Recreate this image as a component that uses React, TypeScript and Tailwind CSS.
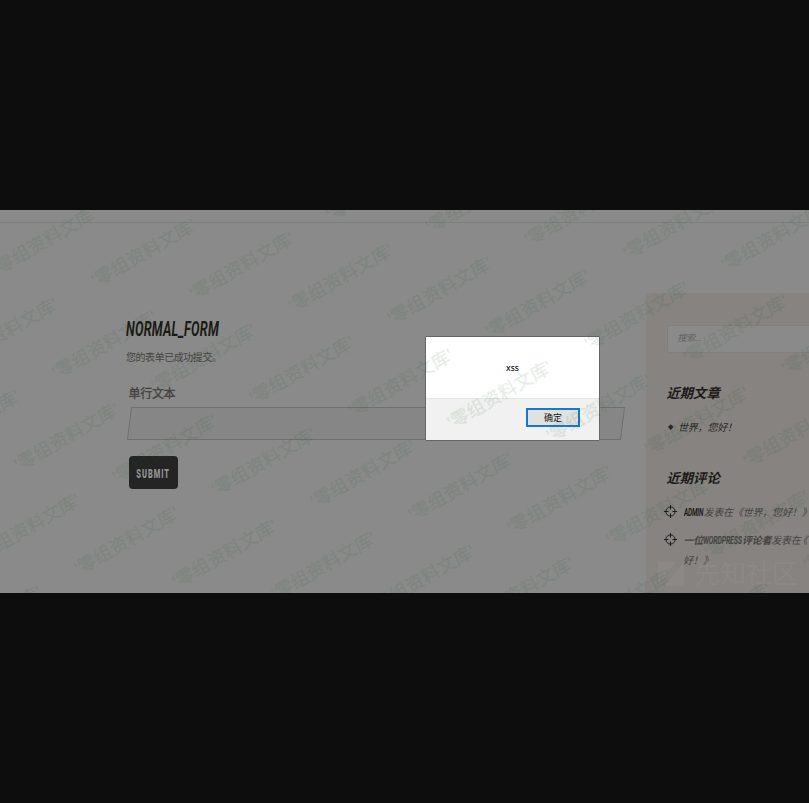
import React from "react";

const stamps = [-2, -1, 0, 1, 2, 3, 4].flatMap((row) =>
  Array.from({ length: 13 }, (_, i) => i - 3).map((col) => ({
    x: 143.5 + 98.7 * col - 38.5 * row,
    y: 43.2 + 12.6 * col + 91.7 * row,
  }))
).filter((p) => p.x > -56 && p.x < 865 && p.y > -38 && p.y < 420);

function Watermark() {
  return (
    <div className="pointer-events-none absolute inset-0 z-20 overflow-hidden" aria-hidden="true">
      {stamps.map((p, i) => (
        <span
          key={i}
          className="absolute -translate-x-1/2 -translate-y-1/2 -rotate-30 text-[18px] leading-none tracking-[0.3px] whitespace-nowrap text-[#1f5b2b] opacity-11 [-webkit-text-stroke:0.25px_#1f5b2b]"
          style={{ left: p.x, top: p.y }}
        >
          '零组资料文库'
        </span>
      ))}
    </div>
  );
}

function Crosshair() {
  return (
    <svg className="h-[14px] w-[14px] shrink-0" viewBox="0 0 14 14" fill="none" stroke="#1d1d1d" strokeWidth="1">
      <circle cx="6.5" cy="6.5" r="4.6" />
      <path d="M6.5 0V4.5M6.5 8.5V13M0 6.5H4.5M8.5 6.5H13" />
    </svg>
  );
}

function FormColumn() {
  return (
    <main className="flex w-[646px] shrink-0 flex-col items-start pt-[95px] pl-[126px]">
      <h1 className="h-[22px] w-[93px] text-[19.5px] leading-[22px] font-bold whitespace-nowrap text-[#1c1a15] italic">
        <span className="inline-block origin-left scale-x-[0.655] font-[Roboto] tracking-[0.3px]">NORMAL_FORM</span>
      </h1>
      <p className="mt-[10px] text-[10px] leading-[16px] tracking-[-0.45px] text-[#454340]">您的表单已成功提交。</p>
      <label className="mt-[18px] ml-[2.5px] text-[12px] leading-[20px] tracking-[-0.3px] text-[#43413e] [-webkit-text-stroke:0.3px_#43413e]">单行文本</label>
      <div className="mt-[3px] ml-[3px] h-[33px] w-[494px] -skew-x-7 border border-[#707070] bg-[#868686]" />
      <button className="mt-[16px] ml-[3px] flex h-[33px] w-[49px] items-center justify-center rounded-[4px] bg-[#242424] pt-[3px] text-[12px] text-[#939393]">
        <span className="inline-block scale-x-[0.62] font-[Roboto] font-black tracking-[1.6px]">SUBMIT</span>
      </button>
    </main>
  );
}

function Sidebar() {
  return (
    <aside className="mt-[70px] flex h-[300px] w-[163px] shrink-0 flex-col overflow-hidden bg-[#868380] pt-[32px] pl-[20.5px] text-[10px] whitespace-nowrap italic">
      <div className="flex h-[28px] w-[160px] shrink-0 items-center rounded-[2px] border border-[#817e7b] bg-[#8a8a8a] pl-[10px] text-[9px] tracking-[-0.3px] text-[#5e5e5e]">
        搜索...
      </div>
      <h2 className="mt-[30px] text-[13.3px] leading-[22px] font-bold text-[#1c1a18]">近期文章</h2>
      <div className="mt-[13px] flex h-[18px] items-center tracking-[-0.2px] text-[#282624]">
        <span className="mr-[6px] ml-[2px] h-[3.5px] w-[3.5px] rotate-45 bg-[#282624]" />
        世界，您好！
      </div>
      <h2 className="mt-[32px] text-[13.3px] leading-[22px] font-bold text-[#1c1a18]">近期评论</h2>
      <div className="mt-[13px] -ml-[3px] flex h-[18px] items-center tracking-[-0.2px] text-[#454240]">
        <Crosshair />
        <span className="ml-[6px] w-[20px] font-[Roboto] font-bold text-[#1c1a18]">
          <span className="inline-block origin-left scale-x-[0.64]">ADMIN</span>
        </span>
        发表在《世界，您好！》
      </div>
      <div className="mt-[10px] -ml-[3px] flex h-[18px] items-center tracking-[-0.25px] text-[#454240]">
        <Crosshair />
        <b className="ml-[6px]">一位</b>
        <span className="w-[39px] font-[Roboto] font-bold">
          <span className="inline-block origin-left scale-x-[0.7]">WORDPRESS</span>
        </span>
        <b>评论者</b>
        <span>发表在</span>
        <span className="-ml-[3px]">《</span>
      </div>
      <div className="mt-[3px] ml-[16.5px] h-[18px] leading-[18px] text-[#454240]">好！》</div>
    </aside>
  );
}

function AlertDialog() {
  return (
    <div className="absolute top-[126px] left-[425px] z-10 flex h-[105px] w-[175px] flex-col rounded-[1px] border border-[#666] bg-white text-[#111]">
      <div className="flex h-[62px] items-center justify-center border-b border-[#e5e5e5] pt-[2px] font-['Noto_Sans'] text-[8.5px] font-medium">xss</div>
      <div className="flex flex-1 items-start justify-end bg-[#f1f1f1] pt-[9px] pr-[19px]">
        <button className="flex h-[19px] w-[54px] items-center justify-center border-2 border-[#1479d2] bg-[#e1e1e1] pt-[2px] text-[9px] leading-none">确定</button>
      </div>
    </div>
  );
}

function CommunityMark() {
  return (
    <div className="absolute top-[350px] left-[658px] flex h-[28px] items-center gap-[9px] text-[#928f8c]/45">
      <svg className="h-[24px] w-[27px]" viewBox="0 0 27 24" fill="currentColor">
        <path d="M0 0H18L0 22Z M26 0V24H6Z" />
      </svg>
      <span className="text-[26px] leading-[28px]">先知社区</span>
    </div>
  );
}

export default function App() {
  return (
    <div className="flex h-[803px] w-[809px] flex-col overflow-hidden bg-[#0d0d0d] pt-[210px] font-['Liberation_Sans','Noto_Sans_CJK_SC',sans-serif]">
      <section className="relative h-[383px] overflow-hidden bg-[#8a8a8a]">
        <div className="h-[13px] border-b border-[#7d7f7e]" />
        <div className="flex">
          <FormColumn />
          <Sidebar />
        </div>
        <CommunityMark />
        <AlertDialog />
        <Watermark />
      </section>
    </div>
  );
}
